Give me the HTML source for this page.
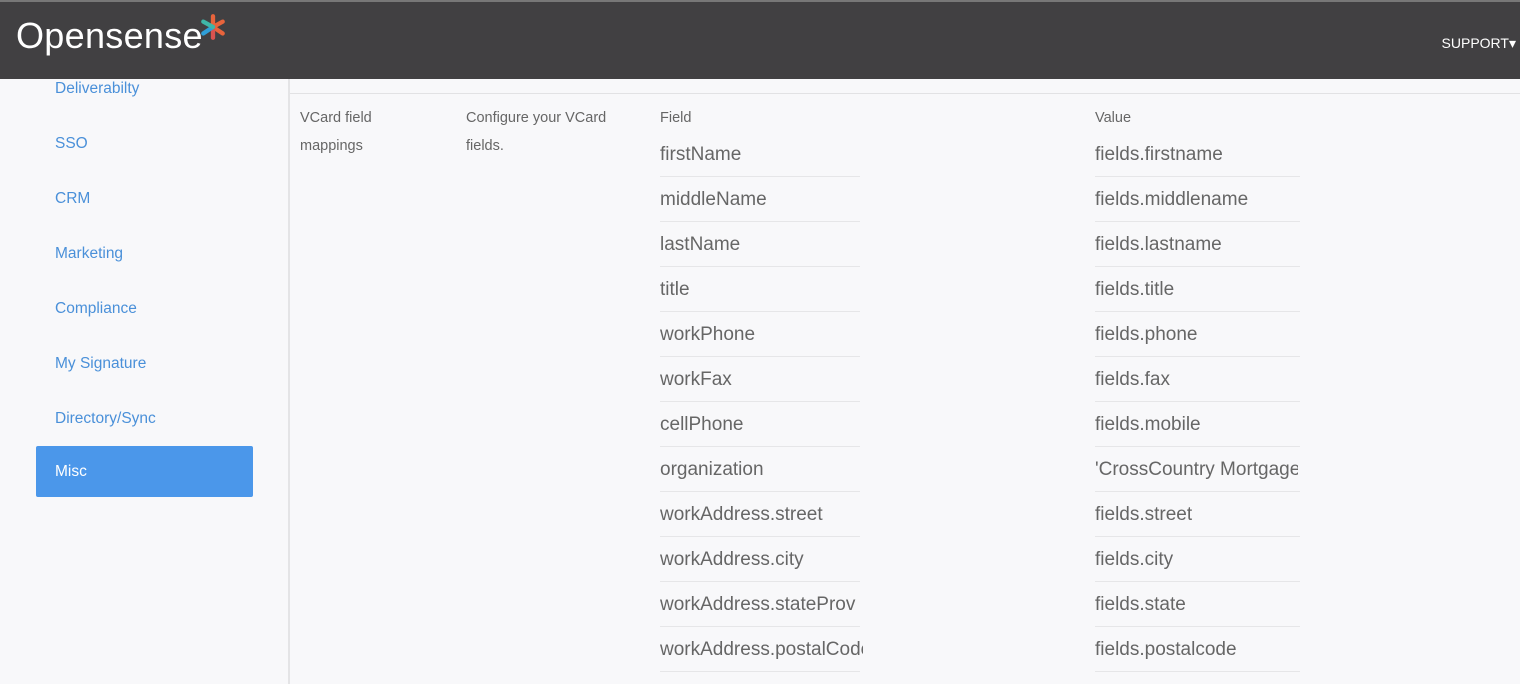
<!DOCTYPE html>
<html><head><style>
body{margin:0;width:1520px;height:684px;overflow:hidden;background:#f8f8fa;font-family:"Liberation Sans",sans-serif;position:relative}
.hdr{position:absolute;left:0;top:0;width:1520px;height:79px;background:#414042;border-top:2px solid #777;box-sizing:border-box}
.logo{position:absolute;left:16px;top:13px;color:#fff;font-size:36px;letter-spacing:0.3px}
.sup{position:absolute;right:4px;top:33px;color:#fff;font-size:14px}
.side{position:absolute;left:0;top:79px;width:288px;height:605px;background:#f8f8fa;border-right:2px solid #e4e4e6}
.side a{position:absolute;left:55px;color:#4a90d9;font-size:15.5px;text-decoration:none}
.misc{position:absolute;left:36px;top:446px;width:217px;height:51px;background:#4b97ea;border-radius:2px;color:#fff;font-size:15.5px;line-height:51px;padding-left:19px;box-sizing:border-box}
.topline{position:absolute;left:290px;top:93px;width:1230px;height:1px;background:#e2e2e4}
.t{position:absolute;color:#666;font-size:14.5px}
.r{position:absolute;color:#666;font-size:19px;overflow:hidden;white-space:nowrap}
.ln{position:absolute;height:1px;background:#e6e6e8}
</style></head><body>
<div class="hdr"><div class="logo">Opensense</div><svg width="28" height="28" viewBox="0 0 26 26" style="position:absolute;left:199px;top:11px"><g stroke-width="4" stroke-linecap="round"><line x1="13" y1="13" x2="13" y2="3" stroke="#e8643c"/><line x1="13" y1="13" x2="22" y2="8" stroke="#e8643c"/><line x1="13" y1="13" x2="22" y2="19" stroke="#e8643c"/><line x1="13" y1="13" x2="13" y2="23" stroke="#d9534f"/><line x1="13" y1="13" x2="4" y2="19" stroke="#2f9fd8"/><line x1="13" y1="13" x2="4" y2="8" stroke="#3fb6a8"/></g></svg><div class="sup">SUPPORT▾</div></div>
<div class="side">
<a style="top:1px">Deliverabilty</a>
<a style="top:56px">SSO</a>
<a style="top:111px">CRM</a>
<a style="top:166px">Marketing</a>
<a style="top:221px">Compliance</a>
<a style="top:276px">My Signature</a>
<a style="top:331px">Directory/Sync</a>
</div>
<div class="misc">Misc</div>
<div class="topline"></div>
<div class="t" style="left:300px;top:104px;line-height:28px">VCard field<br>mappings</div>
<div class="t" style="left:466px;top:104px;line-height:28px">Configure your VCard<br>fields.</div>
<div class="t" style="left:660px;top:110px">Field</div>
<div class="t" style="left:1095px;top:110px">Value</div>
<div id="rows"></div>
<script>
var f=["firstName","middleName","lastName","title","workPhone","workFax","cellPhone","organization","workAddress.street","workAddress.city","workAddress.stateProv","workAddress.postalCode"];
var v=["fields.firstname","fields.middlename","fields.lastname","fields.title","fields.phone","fields.fax","fields.mobile","'CrossCountry Mortgage'","fields.street","fields.city","fields.state","fields.postalcode"];
var h="";for(var i=0;i<12;i++){var y=144+45*i;
h+='<div class="r" style="left:660px;top:'+y+'px;width:203px">'+f[i]+'</div><div class="r" style="left:1095px;top:'+y+'px;width:203px">'+v[i]+'</div>';
h+='<div class="ln" style="left:660px;top:'+(y+32)+'px;width:200px"></div><div class="ln" style="left:1095px;top:'+(y+32)+'px;width:205px"></div>';}
document.getElementById("rows").innerHTML=h;
</script>
</body></html>
